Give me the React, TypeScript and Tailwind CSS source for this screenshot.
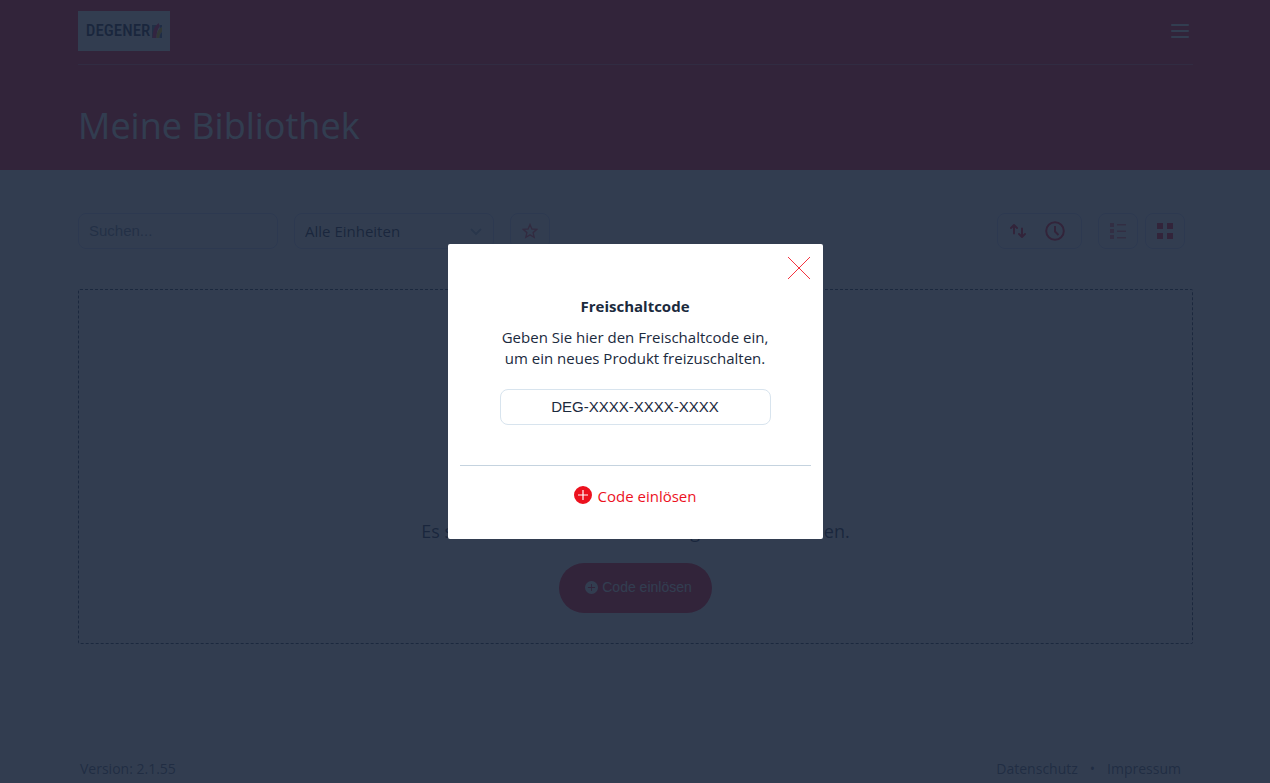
import React from "react";

function PlusCircle({ className }: { className: string }) {
    return (
        <svg className={className} viewBox="0 0 18 18" aria-hidden="true">
            <path
                fill="currentColor"
                fillRule="evenodd"
                d="M9 0a9 9 0 1 0 0 18A9 9 0 0 0 9 0ZM8.4 4h1.200v4.400H14v1.200H9.600V14H8.400V9.600H4V8.400h4.400Z"
            />
        </svg>
    );
}

function Logo() {
    return (
        <a href="#" className="flex h-10 w-[92px] items-center justify-center gap-[2px] bg-white text-[#0c1a3c]">
            <span className="font-['Roboto_Condensed','Roboto',sans-serif] text-[17px] font-medium">DEGENER</span>
            <svg className="h-4 w-[10px] shrink-0" viewBox="0 0 10 16" aria-hidden="true">
                <path fill="#5b7090" d="M0 2h5L1 13v2H0Z" />
                <path fill="#ff1060" d="M3.500 3 6.500 0 8 3C5.500 6 4.500 10 4.500 15H.5C.5 10 1.500 6 3.500 3Z" />
                <path fill="#f0c000" d="M10 4v5c-2 1.500-2.500 3.500-2.500 6h-3C4.500 10 6 6 10 4Z" />
                <path fill="#3d5c95" d="M8 2h2v2L7.500 5.500ZM10 9v6H7.500C7.500 12.500 8 10.500 10 9Z" />
            </svg>
        </a>
    );
}

function Header() {
    return (
        <header className="h-[170px] bg-[#ff001f] pr-[77px] pl-[78px] text-white">
            <div className="flex h-[65px] items-start justify-between border-b border-[#f05070] pt-[11px]">
                <Logo />
                <button type="button" aria-label="Menü" className="mt-3 mr-1">
                    <svg className="h-4 w-[18px]" viewBox="0 0 18 16" stroke="currentColor" strokeWidth="2" strokeLinecap="round" aria-hidden="true">
                        <path d="M1 2h16M1 8h16M1 14h16" />
                    </svg>
                </button>
            </div>
            <h1 className="pt-9 text-4xl leading-[50px]">Meine Bibliothek</h1>
        </header>
    );
}

function Toolbar() {
    return (
        <div className="flex items-center justify-between pr-2">
            <div className="flex items-center gap-4">
                <input
                    type="text"
                    aria-label="Suchen"
                    placeholder="Suchen..."
                    className="h-9 w-[200px] rounded-lg border border-[#c8d2f8] px-[10px] pb-0.5 font-['Liberation_Sans',sans-serif] text-[15px] placeholder:text-[#6b7d98]"
                />
                <div className="relative">
                    <select aria-label="Einheiten" className="h-9 w-[200px] appearance-none rounded-lg border border-[#c8d2f8] px-[10px] text-[15px]">
                        <option>Alle Einheiten</option>
                    </select>
                    <svg className="pointer-events-none absolute top-[15px] right-3 h-2 w-3" viewBox="0 0 12 8" fill="none" stroke="#a4b4c8" strokeWidth="2" aria-hidden="true">
                        <path d="m1 1 5 5 5-5" />
                    </svg>
                </div>
                <button type="button" aria-label="Favoriten" className="flex h-9 w-10 items-center justify-center rounded-lg border border-[#c8d2f8] text-[#ff001f]">
                    <svg className="size-4 opacity-70" viewBox="0 0 16 16" fill="none" stroke="currentColor" strokeWidth="1.4" strokeLinejoin="miter" aria-hidden="true">
                        <path d="m8 1.500 1.900 4.500 4.900.4-3.700 3.200 1.100 4.800L8 11.900l-4.200 2.500 1.100-4.800L1.200 6.400l4.900-.4Z" />
                    </svg>
                </button>
            </div>
            <div className="flex items-center text-[#ff001f]">
                <div className="flex h-9 w-[85px] items-center gap-[18px] rounded-lg border border-[#c8d2f8] pl-[11px]">
                    <button type="button" aria-label="Sortierung umkehren">
                        <svg className="h-4 w-[18px]" viewBox="0 0 18 16" fill="none" stroke="currentColor" strokeWidth="2" strokeLinecap="round" strokeLinejoin="round" aria-hidden="true">
                            <path d="M5 10.500V2.500M2 5 5 2l3 3M13 5.500v8M10 11l3 3 3-3" />
                        </svg>
                    </button>
                    <button type="button" aria-label="Nach Datum sortieren">
                        <svg className="size-5" viewBox="0 0 20 20" fill="none" stroke="currentColor" strokeWidth="2" aria-hidden="true">
                            <circle cx="10" cy="10" r="8.800" />
                            <path d="M10 5v5.500l3.500 3.500" />
                        </svg>
                    </button>
                </div>
                <button type="button" aria-label="Listenansicht" className="ml-4 flex h-9 w-10 items-center justify-center rounded-lg border border-[#c8d2f8]">
                    <svg className="size-4 opacity-60" viewBox="0 0 16 16" fill="currentColor" aria-hidden="true">
                        <path d="M0 0h4v4H0ZM0 6h4v4H0ZM0 12h4v4H0ZM7 1h9v1.500H7ZM7 7.500h9V9H7ZM7 14h9v1.500H7Z" />
                    </svg>
                </button>
                <button type="button" aria-label="Kachelansicht" className="ml-[7px] flex h-9 w-10 items-center justify-center rounded-lg border border-[#c8d2f8]">
                    <svg className="size-4" viewBox="0 0 16 16" fill="currentColor" aria-hidden="true">
                        <path d="M0 0h6v6H0ZM10 0h6v6h-6ZM0 10h6v6H0ZM10 10h6v6h-6Z" />
                    </svg>
                </button>
            </div>
        </div>
    );
}

function CodeDialog() {
    return (
        <div className="fixed inset-0 flex items-center justify-center bg-[#1c283d]/90">
            <form role="dialog" aria-modal="true" aria-labelledby="code-title" className="flex w-[375px] flex-col rounded-xs bg-white px-3 pt-3 pb-8 text-center text-[15px] text-[#1b2a3d]">
                <button type="button" aria-label="Schließen" className="self-end text-[#f5333f]">
                    <svg className="size-6" viewBox="0 0 24 24" stroke="currentColor" strokeWidth="1" aria-hidden="true">
                        <path d="m1 1 22 22M23 1 1 23" />
                    </svg>
                </button>
                <h2 id="code-title" className="mt-4 leading-[21px] font-bold">Freischaltcode</h2>
                <p className="mt-[10px] leading-[21px]">
                    Geben Sie hier den Freischaltcode ein,
                    <br />
                    um ein neues Produkt freizuschalten.
                </p>
                <input
                    type="text"
                    aria-label="Freischaltcode"
                    placeholder="DEG-XXXX-XXXX-XXXX"
                    className="mx-10 mt-5 h-9 rounded-lg border border-[#d8e4ee] pb-0.5 text-center font-['Liberation_Sans',sans-serif] placeholder:text-[#1b2a3d]"
                />
                <hr className="mt-10 border-[#c5d3df]" />
                <button type="submit" className="mt-5 flex items-start justify-center gap-[6px] self-center text-[#ec111e]">
                    <PlusCircle className="size-[18px]" />
                    <span className="leading-[21px]">Code einlösen</span>
                </button>
            </form>
        </div>
    );
}

export default function App() {
    return (
        <div className="flex min-h-screen flex-col bg-white font-['Open_Sans',sans-serif] text-[#0c1a3c]">
            <Header />
            <main className="flex-1 pt-[43px] pr-[77px] pl-[78px]">
                <Toolbar />
                <section className="mt-10 flex h-[355px] flex-col items-center justify-end rounded-xs border border-dashed border-[#1b2a48] pb-[30px]">
                    <p className="text-lg leading-6">Es sind noch keine Produkte freigeschaltet worden.</p>
                    <button type="button" className="mt-5 flex h-[50px] w-[153px] items-center justify-center gap-1 rounded-full bg-[#ff001f] pb-0.5 pl-1.5 font-['Liberation_Sans',sans-serif] text-sm text-white">
                        <PlusCircle className="size-[13px]" />
                        Code einlösen
                    </button>
                </section>
            </main>
            <footer className="flex justify-between pr-[89px] pb-1 pl-20 text-sm leading-5 text-[#50627a]">
                <span>Version: 2.1.55</span>
                <nav className="flex gap-3">
                    <a href="#">Datenschutz</a>
                    <span>•</span>
                    <a href="#">Impressum</a>
                </nav>
            </footer>
            <CodeDialog />
        </div>
    );
}
